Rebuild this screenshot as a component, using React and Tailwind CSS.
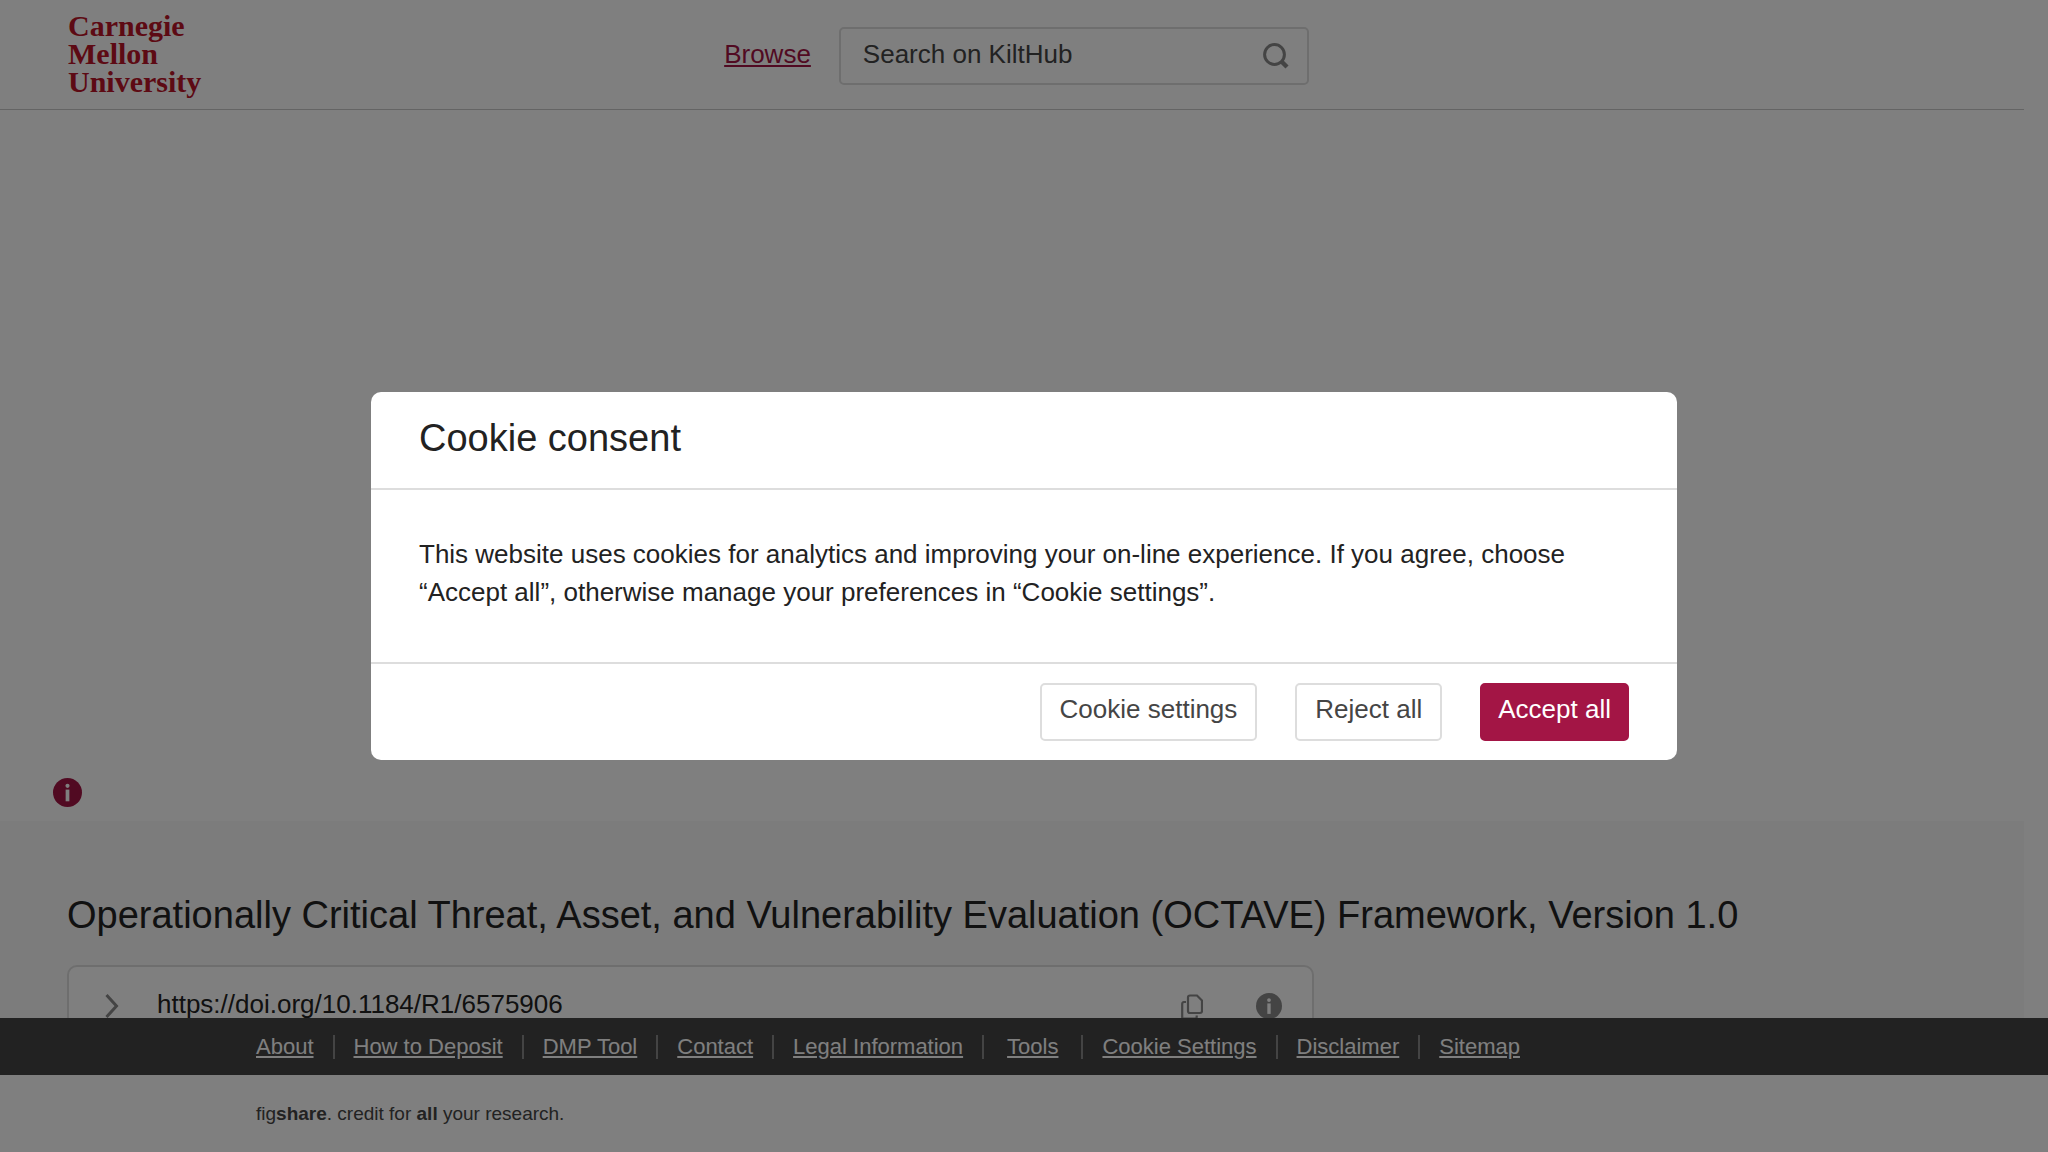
import React, { useState } from "react";

const footerLinks = [
  "About",
  "How to Deposit",
  "DMP Tool",
  "Contact",
  "Legal Information",
  "Tools",
  "Cookie Settings",
  "Disclaimer",
  "Sitemap",
];

const InfoIcon = ({ className }) => (
  <svg viewBox="0 0 28 28" className={className} aria-hidden="true">
    <circle cx="14" cy="14" r="14" fill="currentColor" />
    <circle cx="14" cy="7.6" r="2" fill="#fff" />
    <path d="M12.2 11.2h3.6v11.3h-3.6z" fill="#fff" />
  </svg>
);

const SearchIcon = () => (
  <svg viewBox="0 0 26 26" className="h-[26px] w-[26px]" fill="none" stroke="currentColor" aria-hidden="true">
    <circle cx="11.5" cy="11.5" r="9.9" strokeWidth="3" />
    <path d="M18.5 18.5l5.5 5.5" strokeWidth="4.4" />
  </svg>
);

const CopyIcon = () => (
  <svg viewBox="0 0 22 28" className="h-7 w-[22px]" fill="none" stroke="currentColor" strokeWidth="2.2" aria-hidden="true">
    <path d="M9 1.5h7L21 6.5V17a2 2 0 0 1-2 2H9a2 2 0 0 1-2-2V3.5a2 2 0 0 1 2-2z" />
    <path d="M5 8H3a2 2 0 0 0-1.8 2v14.5h13a1.5 1.5 0 0 0 1.5-1.5v-1.5" />
  </svg>
);

const ChevronIcon = () => (
  <svg viewBox="0 0 14 24" className="h-6 w-[14px]" fill="none" stroke="currentColor" strokeWidth="3" aria-hidden="true">
    <path d="M1.5 1l10 11-10 11" />
  </svg>
);

const Header = () => {
  const [query, setQuery] = useState("");

  return (
    <header className="flex h-[110px] shrink-0 items-center border-b border-[#c8c8c8] pl-[68px] pr-[59px] pt-0.5">
      <div className="flex-1">
        <a
          href="#"
          className="inline-block pb-0.5 font-['Liberation_Serif',serif] text-[30px] font-bold leading-7 text-[#bb1428]"
        >
          Carnegie
          <br />
          Mellon
          <br />
          University
        </a>
      </div>
      <nav className="flex items-center gap-7">
        <a href="#" className="pb-1 text-[26px] leading-[38px] text-[#a31545] underline">
          Browse
        </a>
        <form
          className="flex h-[58px] w-[470px] items-center rounded-[5px] border-2 border-[#dcdcdc] pl-[22px] pr-[18px]"
          onSubmit={(e) => e.preventDefault()}
        >
          <input
            type="text"
            aria-label="Search on KiltHub"
            placeholder="Search on KiltHub"
            value={query}
            onChange={(e) => setQuery(e.target.value)}
            className="min-w-0 flex-1 pb-1 text-[26px] leading-[38px] placeholder:text-[#454545] focus:outline-none"
          />
          <button type="submit" aria-label="Search" className="text-[#888]">
            <SearchIcon />
          </button>
        </form>
      </nav>
      <div className="flex-1" />
    </header>
  );
};

const Footer = () => (
  <footer className="shrink-0 bg-white">
    <ul className="flex bg-[#444] px-64 pb-4 pt-[17px] text-[22px] leading-6 text-white">
      {footerLinks.map((label, i) => (
        <li key={label} className="flex">
          {i > 0 && <span className="mx-[19px] w-0.5 bg-[#888]" />}
          <a href="#" className={label === "Tools" ? "mx-1 underline" : "underline"}>
            {label}
          </a>
        </li>
      ))}
    </ul>
    <p className="px-64 pb-6 pt-[25px] text-[19px] leading-7 text-[#454545]">
      fig<b>share</b>. credit for <b>all</b> your research.
    </p>
  </footer>
);

const CookieModal = ({ onClose }) => (
  <div className="fixed inset-0 flex items-center justify-center bg-black/50">
    <div role="dialog" aria-labelledby="cookie-title" className="w-[1306px] max-w-full rounded-[10px] bg-white">
      <div className="border-b-2 border-[#ddd] px-12 pb-[27px] pt-[23px]">
        <h2 id="cookie-title" className="text-[38px] leading-[46px]">
          Cookie consent
        </h2>
      </div>
      <p className="px-12 pb-[51px] pt-[45px] text-[26px] leading-[38px]">
        This website uses cookies for analytics and improving your on-line experience. If you agree, choose “Accept
        all”, otherwise manage your preferences in “Cookie settings”.
      </p>
      <div className="flex justify-end gap-[38px] border-t-2 border-[#ddd] px-12 py-[19px] text-[26px] leading-[38px] text-[#454545]">
        <button onClick={onClose} className="rounded-[5px] border-2 border-[#ddd] px-[18px] pb-[11px] pt-[5px]">
          Cookie settings
        </button>
        <button onClick={onClose} className="rounded-[5px] border-2 border-[#ddd] px-[18px] pb-[11px] pt-[5px]">
          Reject all
        </button>
        <button
          onClick={onClose}
          className="rounded-[5px] border-2 border-[#a31545] bg-[#a31545] px-4 pb-[11px] pt-[5px] text-white"
        >
          Accept all
        </button>
      </div>
    </div>
  </div>
);

const App = () => {
  const [showCookies, setShowCookies] = useState(true);

  return (
    <div className="flex h-screen flex-col overflow-hidden bg-white font-['Liberation_Sans',Arial,sans-serif] text-[#222]">
      <div className="flex min-h-0 flex-1 flex-col overflow-hidden pr-6">
        <Header />
        <main className="flex min-h-0 flex-1 flex-col">
          <div className="flex h-[711px] shrink-0 items-end pb-[14px] pl-[53px]">
            <button aria-label="Information" className="text-[#a31545]">
              <InfoIcon className="h-[29px] w-[29px]" />
            </button>
          </div>
          <section className="flex-1 bg-[#f8f8f8] px-[67px] pt-[71px]">
            <h1 className="text-[38px] leading-[46px]">
              Operationally Critical Threat, Asset, and Vulnerability Evaluation (OCTAVE) Framework, Version 1.0
            </h1>
            <div className="mt-[27px] flex w-[66%] items-center rounded-[10px] border-2 border-[#dcdcdc] bg-white pb-[18px] pl-9 pr-[30px] pt-[18px]">
              <button aria-label="Expand" className="pt-1 text-[#888]">
                <ChevronIcon />
              </button>
              <span className="ml-[38px] flex-1 text-[26px] leading-[38px]">https://doi.org/10.1184/R1/6575906</span>
              <button aria-label="Copy DOI" className="pt-2 text-[#888]">
                <CopyIcon />
              </button>
              <button aria-label="DOI information" className="ml-[53px] pt-1 text-[#888]">
                <InfoIcon className="h-[26px] w-[26px]" />
              </button>
            </div>
          </section>
        </main>
      </div>
      <Footer />
      {showCookies && <CookieModal onClose={() => setShowCookies(false)} />}
    </div>
  );
};

export default App;
